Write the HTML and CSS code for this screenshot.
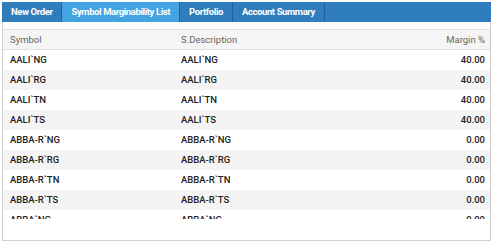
FILE: index.html
```html
<!DOCTYPE html>
<html lang="en">
<head>
  <meta charset="UTF-8" />
  <title>Symbol Marginability List</title>
  <link rel="stylesheet" href="styles.css">
</head>
<body>
  <div class="panel">
    <div class="tabs">
      <div class="tab">New Order</div>
      <div class="tab active">Symbol Marginability List</div>
      <div class="tab">Portfolio</div>
      <div class="tab">Account Summary</div>
    </div>

    <div class="grid">
      <div class="row head">
        <div>Symbol</div>
        <div>S.Description</div>
        <div class="num">Margin %</div>
      </div>
      <div class="rows">
        <div class="row"><div>AALI`NG</div><div>AALI`NG</div><div class="num">40.00</div></div>
        <div class="row"><div>AALI`RG</div><div>AALI`RG</div><div class="num">40.00</div></div>
        <div class="row"><div>AALI`TN</div><div>AALI`TN</div><div class="num">40.00</div></div>
        <div class="row"><div>AALI`TS</div><div>AALI`TS</div><div class="num">40.00</div></div>
        <div class="row"><div>ABBA-R`NG</div><div>ABBA-R`NG</div><div class="num">0.00</div></div>
        <div class="row"><div>ABBA-R`RG</div><div>ABBA-R`RG</div><div class="num">0.00</div></div>
        <div class="row"><div>ABBA-R`TN</div><div>ABBA-R`TN</div><div class="num">0.00</div></div>
        <div class="row"><div>ABBA-R`TS</div><div>ABBA-R`TS</div><div class="num">0.00</div></div>
        <div class="row"><div>ABBA`NG</div><div>ABBA`NG</div><div class="num">0.00</div></div>
        <div class="row"><div>ABBA`RG</div><div>ABBA`RG</div><div class="num">0.00</div></div>
      </div>
    </div>
  </div>
</body>
</html>
```

FILE: styles.css
```css
body {
  margin: 0;
  padding: 2px;
  font-family: Roboto, "Liberation Sans", sans-serif;
  background: #fff;
}
.panel {
  width: 489px;
  height: 239px;
  box-sizing: border-box;
  border: 1px solid #cfcfcf;
  border-top: none;
}
.tabs {
  display: flex;
  height: 20px;
  margin: 0 -1px;
  background: #2f7dbd;
}
.tab {
  padding: 0 9px;
  line-height: 20px;
  font-size: 9.5px;
  font-weight: bold;
  letter-spacing: -0.4px;
  color: #fff;
  border-right: 1px solid #1e6298;
}
.tab.active {
  background: #43a4e4;
}
.grid {
  margin-top: 7px;
}
.row {
  display: grid;
  grid-template-columns: 171px 1fr 120px;
  height: 20px;
  line-height: 20px;
  padding: 0 5px 0 7px;
  font-size: 9.5px;
  font-weight: 500;
  color: #222;
}
.row.head {
  background: #f5f5f5;
  border-top: 1px solid #e1e1e1;
  border-bottom: 1px solid #e1e1e1;
  height: 19px;
  line-height: 19px;
  font-weight: normal;
  color: #666;
}
.rows {
  height: 169px;
  overflow: hidden;
}
.rows .row:nth-child(even) {
  background: #f4f4f4;
}
.num {
  text-align: right;
}
```
